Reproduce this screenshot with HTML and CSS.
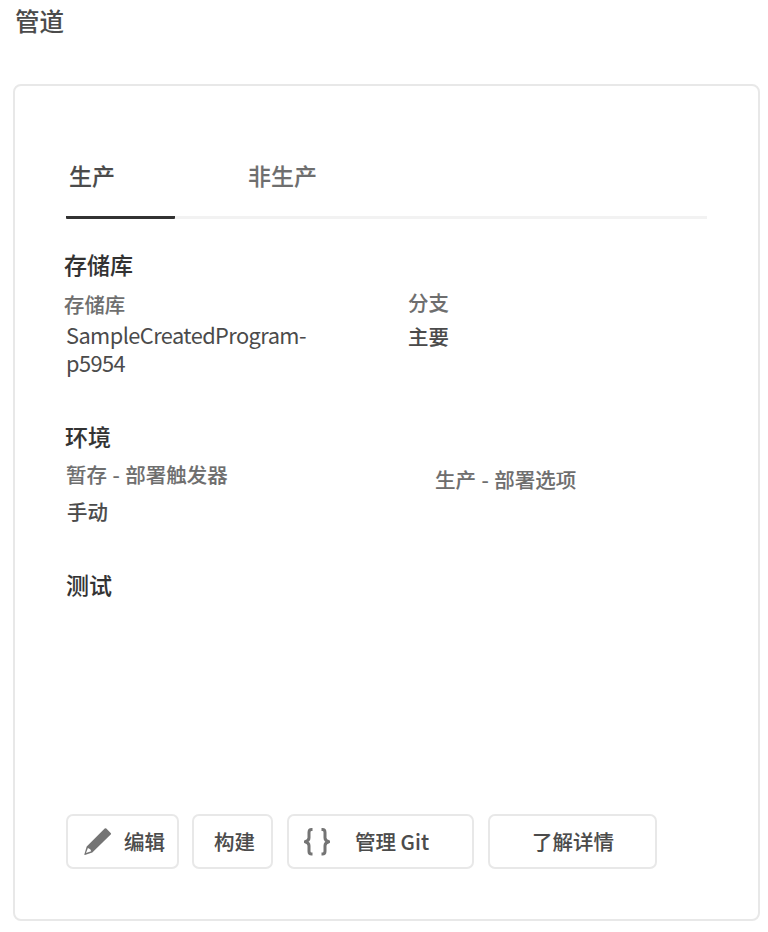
FILE: index.html
```html
<!DOCTYPE html>
<html lang="zh-CN">
<head>
<meta charset="utf-8">
<title>管道</title>
<link rel="stylesheet" href="styles.css">
</head>
<body>
<h1 class="title">管道</h1>
<main class="card">
  <nav class="tabs">
    <a class="tab tab-active">生产</a>
    <a class="tab">非生产</a>
  </nav>
  <section class="section repo">
    <h2 class="heading">存储库</h2>
    <div class="columns">
      <div class="field">
        <div class="label">存储库</div>
        <div class="value latin">SampleCreatedProgram-<br>p5954</div>
      </div>
      <div class="field branch">
        <div class="label">分支</div>
        <div class="value">主要</div>
      </div>
    </div>
  </section>
  <section class="section env">
    <h2 class="heading">环境</h2>
    <div class="columns">
      <div class="field">
        <div class="label">暂存 - 部署触发器</div>
        <div class="value">手动</div>
      </div>
      <div class="field deploy">
        <div class="label">生产 - 部署选项</div>
      </div>
    </div>
  </section>
  <section class="section test">
    <h2 class="heading">测试</h2>
  </section>
  <div class="actions">
    <button class="btn btn-edit">
      <svg class="icon-edit" width="28" height="28" viewBox="0 0 28 28">
        <path fill="#747474" fill-rule="evenodd" d="M20.7 .6Q21.5 -.1 22.3 .6L26.7 4.9Q27.5 5.7 26.7 6.5L8.3 24.5L.9 26.9Q.2 27.1 .4 26.3L2.7 18.5ZM3.9 20L2 25L7.2 23.3Q7 21 3.9 20Z"/>
      </svg>
      <span>编辑</span>
    </button>
    <button class="btn btn-build"><span>构建</span></button>
    <button class="btn btn-git">
      <svg class="icon-braces" width="26" height="28" viewBox="0 0 26 28" fill="none" stroke="#747474" stroke-width="3" stroke-linejoin="round">
        <path d="M8.5 1.6H7.6Q5 1.6 5 4.4V9.8Q5 12.8 1.2 13.8Q5 14.8 5 17.8V23.2Q5 26 7.6 26H8.5"/>
        <path d="M17.5 1.6H18.4Q21 1.6 21 4.4V9.8Q21 12.8 24.8 13.8Q21 14.8 21 17.8V23.2Q21 26 18.4 26H17.5"/>
      </svg>
      <span>管理 Git</span>
    </button>
    <button class="btn btn-more"><span>了解详情</span></button>
  </div>
</main>
</body>
</html>
```
FILE: styles.css
```css
* {
  box-sizing: border-box;
}

body {
  margin: 0;
  padding: 7px 8px 11px 13px;
  height: 932px;
  background: #fff;
  color: #4b4b4b;
  font-family: "Noto Sans CJK SC", sans-serif;
  font-weight: 500;
  -webkit-text-stroke: 0.1px currentColor;
}

.title {
  margin: 0 0 49px 2px;
  font-size: 24.5px;
  font-weight: 500;
  line-height: 28px;
}

.card {
  display: flex;
  flex-direction: column;
  height: 837px;
  padding: 73px 51px 50px;
  border: 2px solid #e8e8e8;
  border-radius: 8px;
}

.tabs {
  display: flex;
  gap: 70px;
  height: 60px;
  width: 641px;
  border-bottom: 3px solid #f2f2f2;
}

.tab {
  height: 60px;
  padding-left: 3px;
  font-size: 23px;
  line-height: 32px;
  color: #6e6e6e;
}

.tab-active {
  width: 109px;
  color: #4b4b4b;
  border-bottom: 3px solid #323232;
  border-radius: 1px;
}

.section {
  display: flex;
  flex-direction: column;
}

.heading {
  margin: 0 0 0 -1px;
  font-size: 23px;
  font-weight: 500;
  line-height: 32px;
  color: #323232;
}

.columns {
  display: flex;
}

.field {
  flex: none;
  width: 343px;
}

.label,
.value {
  font-size: 20.4px;
  line-height: 28px;
}

.label {
  color: #6e6e6e;
}

.repo {
  height: 172px;
  margin: 29px 0 0 -2px;
}

.repo .heading {
  margin-left: 0;
}

.repo .columns {
  margin-top: 10px;
}

.latin {
  margin: 3px 0 0 2px;
  font-size: 21.8px;
  font-weight: 400;
  letter-spacing: -0.57px;
  -webkit-text-stroke: 0;
}

.branch {
  margin: -2px 0 0 1px;
}

.branch .value {
  margin-top: 6px;
}

.env {
  height: 148px;
}

.env .columns {
  margin-top: 8px;
}

.env .label {
  font-size: 20.5px;
  word-spacing: 0.8px;
}

.env .value {
  margin: 9px 0 0 1px;
}

.deploy {
  margin: 5px 0 0 26px;
  width: auto;
}

.test .heading {
  margin-left: 0;
}

.actions {
  display: flex;
  margin-top: auto;
}

.btn {
  display: flex;
  align-items: center;
  height: 55px;
  padding: 0;
  border: 2px solid #e8e8e8;
  border-radius: 7px;
  background: #fff;
  color: #4b4b4b;
  font: 500 20.5px/28px "Noto Sans CJK SC", sans-serif;
}

.btn span {
  margin-top: -2px;
}

.btn-edit {
  width: 113px;
  margin-right: 13px;
  padding-left: 16px;
  gap: 12px;
}

.btn-build {
  width: 81px;
  margin-right: 14px;
  padding-left: 20px;
}

.btn-git {
  width: 187px;
  margin-right: 14px;
  padding-left: 15px;
  gap: 25px;
}

.btn-more {
  width: 169px;
  padding-left: 42px;
}
```
